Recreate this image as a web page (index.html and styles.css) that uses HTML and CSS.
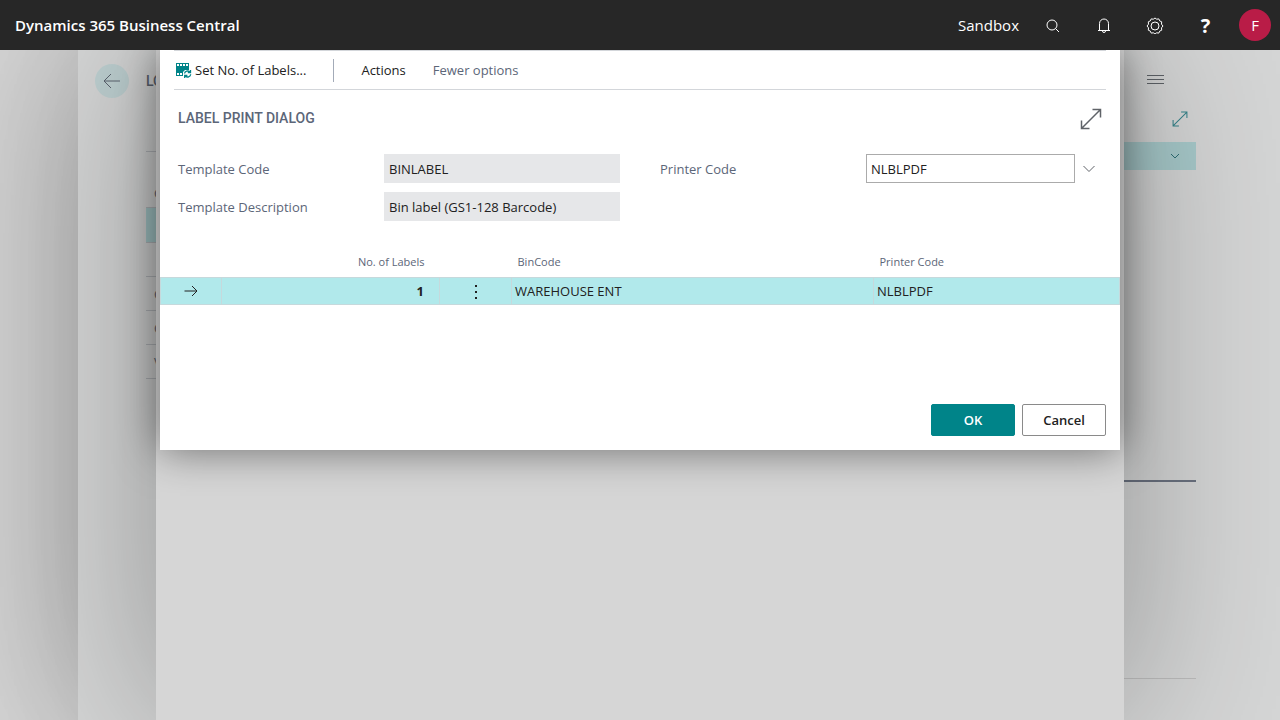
FILE: index.html
```html
<!DOCTYPE html>
<html lang="en">
<head>
  <meta charset="UTF-8">
  <meta name="viewport" content="width=device-width, initial-scale=1">
  <title>Label Print Dialog - Dynamics 365 Business Central</title>
  <link rel="stylesheet" href="styles.css">
</head>
<body>
  <header class="topbar">
    <a class="brand" href="#">Dynamics 365 Business Central</a>
    <span class="environment">Sandbox</span>
    <nav class="tools">
      <button type="button" aria-label="Search">
        <svg width="16" height="16" viewBox="0 0 16 16"><circle cx="7" cy="8" r="5"/><path d="M10.500 11.500L14 15"/></svg>
      </button>
      <button type="button" aria-label="Notifications">
        <svg width="16" height="16" viewBox="0 0 16 16"><path d="M2 13.500H14M3.500 13.500V6.500A4.500 4.500 0 0 1 12.500 6.500V13.500M6.500 14A1.500 1.500 0 0 0 9.500 14"/></svg>
      </button>
      <button type="button" aria-label="Settings">
        <svg width="18" height="18" viewBox="0 0 18 18"><circle cx="9" cy="10" r="4"/><path d="M7.300 3.200L9 2L10.700 3.200L12.800 2.900L13.700 4.900L15.700 5.800L15.500 8.200L17 10L15.500 11.800L15.700 14.200L13.700 15.100L12.800 17.100L10.700 16.800L9 18L7.300 16.800L5.200 17.100L4.300 15.100L2.300 14.200L2.500 11.800L1 10L2.500 8.200L2.300 5.800L4.300 4.900L5.200 2.900Z"/></svg>
      </button>
      <button type="button" class="help" aria-label="Help">?</button>
    </nav>
    <button type="button" class="avatar" aria-label="Account">F</button>
  </header>

  <main class="stage">
    <div class="page">
      <section class="list">
        <div class="list-head">
          <button type="button" class="back" aria-label="Back">
            <svg width="18" height="16" viewBox="0 0 18 16"><path d="M17 8H1.500M8 1L1 8L8 15"/></svg>
          </button>
          <span class="list-title">LO</span>
        </div>
        <ul class="list-rows">
          <li class="list-caption">C</li>
          <li class="selected"></li>
          <li></li>
          <li>C</li>
          <li>C</li>
          <li>V</li>
        </ul>
      </section>
      <aside class="factbox">
        <button type="button" class="icon-btn menu" aria-label="Menu">
          <svg width="17" height="11" viewBox="0 0 17 11"><path d="M0 1.500H17M0 5.500H17M0 9.500H17"/></svg>
        </button>
        <button type="button" class="icon-btn expand-small" aria-label="Expand">
          <svg width="16" height="16" viewBox="0 0 22 22"><path d="M1.500 20.500L20.500 1.500M12.500 1.500H20.500V9.500M1.500 12.500V20.500H9.500"/></svg>
        </button>
        <button type="button" class="factbox-bar" aria-label="Details">
          <svg width="10" height="6" viewBox="0 0 10 6"><path d="M1 1L5 5L9 1"/></svg>
        </button>
        <div class="factbox-body"></div>
        <div class="factbox-foot"></div>
      </aside>
    </div>

    <div class="sheet"></div>

    <form class="dialog" role="dialog" aria-labelledby="dialog-title">
      <div class="actions">
        <button type="button" class="action">
          <svg class="labels-icon" width="16" height="16" viewBox="0 0 16 16">
            <path fill="#008489" d="M0 1H13V8H9L7 10V14H0Z"/>
            <path fill="#fff" d="M1 2H3V4H1ZM4 2H6V4H4ZM7 2H9V4H7ZM10 2H12V4H10ZM1 11H3V13H1ZM4 11H6V13H4Z"/>
            <path fill="none" stroke="#008489" stroke-width="1.300" d="M8.500 11.500A3 3 0 0 1 13.700 10M14.500 8V10.700H11.800M14.700 12.300A3 3 0 0 1 9.500 14M8.700 16V13.300H11.400"/>
          </svg>
          Set No. of Labels...
        </button>
        <span class="divider"></span>
        <button type="button" class="action">Actions</button>
        <button type="button" class="action muted">Fewer options</button>
      </div>

      <div class="dialog-head">
        <h1 id="dialog-title">LABEL PRINT DIALOG</h1>
        <button type="button" class="icon-btn" aria-label="Expand dialog">
          <svg class="expand" width="22" height="22" viewBox="0 0 22 22"><path d="M1.500 20.500L20.500 1.500M12.500 1.500H20.500V9.500M1.500 12.500V20.500H9.500"/></svg>
        </button>
      </div>

      <div class="fields">
        <div class="field">
          <label for="template-code">Template Code</label>
          <input id="template-code" type="text" value="BINLABEL" readonly>
        </div>
        <div class="field">
          <label for="printer-code">Printer Code</label>
          <input id="printer-code" type="text" value="NLBLPDF">
          <button type="button" class="icon-btn lookup" aria-label="Choose printer">
            <svg width="12" height="8" viewBox="0 0 12 8"><path d="M0.500 1L6 6.500L11.500 1"/></svg>
          </button>
        </div>
        <div class="field">
          <label for="template-desc">Template Description</label>
          <input id="template-desc" type="text" value="Bin label (GS1-128 Barcode)" readonly>
        </div>
      </div>

      <table class="lines">
        <colgroup>
          <col class="col-mark"><col class="col-number"><col class="col-more"><col class="col-bin"><col>
        </colgroup>
        <thead>
          <tr>
            <th></th>
            <th class="number">No. of Labels</th>
            <th></th>
            <th>BinCode</th>
            <th>Printer Code</th>
          </tr>
        </thead>
        <tbody>
          <tr>
            <td class="center"><svg width="14" height="12" viewBox="0 0 14 12"><path d="M0.500 6H13M8 1L13 6L8 11"/></svg></td>
            <td class="number"><b>1</b></td>
            <td class="center">
              <button type="button" class="icon-btn more" aria-label="Show more options">
                <svg width="4" height="14" viewBox="0 0 4 14"><path d="M1 0H3V2H1ZM1 6H3V8H1ZM1 12H3V14H1Z"/></svg>
              </button>
            </td>
            <td>WAREHOUSE ENT</td>
            <td>NLBLPDF</td>
          </tr>
        </tbody>
      </table>

      <div class="buttons">
        <button type="submit" class="btn primary">OK</button>
        <button type="button" class="btn">Cancel</button>
      </div>
    </form>
  </main>
</body>
</html>
```
FILE: styles.css
```css
* {
  box-sizing: border-box;
}
body {
  margin: 0;
  height: 100vh;
  display: flex;
  flex-direction: column;
  overflow: hidden;
  font-family: "Segoe UI", "Open Sans", sans-serif;
  font-size: 13px;
  color: #212121;
}
button {
  padding: 0;
  border: none;
  background: none;
  font: inherit;
  color: inherit;
  cursor: pointer;
}
svg {
  display: block;
  fill: none;
  stroke: currentColor;
}

/* top bar */
.topbar {
  flex: none;
  height: 50px;
  display: flex;
  align-items: center;
  padding: 0 9px 0 15px;
  background: #272727;
  color: #fff;
  font-size: 15px;
}
.brand {
  margin-right: auto;
  color: inherit;
  font-weight: 600;
  text-decoration: none;
}
.tools {
  display: flex;
  margin: 0 8px;
}
.tools button {
  width: 51px;
  height: 50px;
  display: flex;
  align-items: center;
  justify-content: center;
}
.tools .help {
  font-size: 20px;
  font-weight: 700;
}
.avatar {
  width: 32px;
  height: 32px;
  border-radius: 50%;
  background: #b91c47;
}

/* stacked layers, each one over the one before */
.stage {
  flex: 1;
  min-height: 0;
  display: grid;
  grid-template-columns: 100%;
  grid-template-rows: 100%;
  overflow: hidden;
  background: #d6d6d6;
}
.page,
.sheet,
.dialog {
  grid-area: 1 / 1;
}
.page {
  display: flex;
  justify-content: space-between;
  margin-left: 78px;
  padding-right: 84px;
  background: #d5d6d6;
  box-shadow: 0 0 168px rgba(0, 0, 0, 0.27);
  color: #5d6470;
}
.sheet {
  margin: 0 156px;
  background: #d6d6d6;
  box-shadow: 0 0 168px rgba(0, 0, 0, 0.32);
}
.dialog {
  align-self: start;
  margin: 0 160px;
  padding-bottom: 14px;
  background: #fff;
  box-shadow: 0 0 40px rgba(0, 0, 0, 0.5);
}

/* page behind */
.list {
  width: 400px;
}
.list-head {
  display: flex;
  align-items: center;
  gap: 17px;
  padding: 14px 17px;
}
.back {
  width: 34px;
  height: 34px;
  display: flex;
  align-items: center;
  justify-content: center;
  border-radius: 50%;
  background: #bfd1d2;
}
.list-title {
  font: 500 14px Roboto, sans-serif;
}
.list-rows {
  list-style: none;
  margin: 39px 0 0 68px;
  padding: 0;
  border-top: 1px solid #b4b7bb;
}
.list-rows li {
  height: 34px;
  padding-left: 8px;
  border-bottom: 1px solid #b4b7bb;
  line-height: 34px;
}
.list-rows .list-caption {
  height: 56px;
  padding-top: 24px;
}
.list-rows .selected {
  height: 35px;
  background: #a8cacb;
}
.factbox {
  width: 200px;
  display: flex;
  flex-direction: column;
  align-items: flex-end;
}
.menu {
  margin: 24px 32px 0 0;
}
.icon-btn {
  color: #5f6368;
}
.expand-small {
  margin: 26px 8px 15px 0;
  color: #35838a;
}
.expand-small svg {
  stroke-width: 1.4;
}
.factbox-bar {
  width: 100%;
  height: 28px;
  display: flex;
  align-items: center;
  justify-content: flex-end;
  padding-right: 16px;
  background: #a8cacb;
  color: #2f6f75;
}
.factbox-body {
  width: 100%;
  height: 312px;
  border-bottom: 2px solid #6b7280;
}
.factbox-foot {
  width: 100%;
  height: 197px;
  border-bottom: 1px solid #bcbcbc;
}

/* dialog */
.actions {
  height: 40px;
  display: flex;
  align-items: center;
  gap: 27px;
  margin: 0 14px;
  padding-left: 2px;
  border-top: 1px solid #d3d6da;
  border-bottom: 1px solid #d3d6da;
}
.action {
  display: flex;
  align-items: center;
  gap: 3px;
}
.labels-icon {
  stroke: none;
}
.muted {
  color: #5c6678;
}
.divider {
  width: 1px;
  height: 23px;
  background: #a3abb8;
}
.dialog-head {
  display: flex;
  justify-content: space-between;
  padding: 18px 18px 0;
}
.dialog-head h1 {
  margin: 0;
  font: 500 14px/20px Roboto, sans-serif;
  color: #5c6678;
}
.expand {
  stroke-width: 1.5;
}
.fields {
  display: grid;
  grid-template-columns: 1fr 1fr;
  gap: 9px 40px;
  padding: 24px 18px 0;
}
.field {
  display: flex;
  align-items: center;
  height: 29px;
}
.field label {
  flex: none;
  width: 206px;
  color: #5c6678;
}
.field input {
  flex: 1;
  min-width: 0;
  height: 100%;
  padding: 0 4px;
  border: 1px solid #ababab;
  border-radius: 0;
  background: #fff;
  font: inherit;
  color: inherit;
}
.field input:read-only {
  border-color: #e6e7e9;
  background: #e6e7e9;
}
.lookup {
  width: 27px;
  height: 100%;
  display: flex;
  align-items: center;
  justify-content: center;
}
.lines {
  width: 100%;
  margin: 26px 0 99px;
  table-layout: fixed;
  border-collapse: collapse;
}
.col-mark {
  width: 61px;
}
.col-number {
  width: 218px;
}
.col-more {
  width: 72px;
}
.col-bin {
  width: 362px;
}
.lines th {
  height: 30px;
  padding: 0 6px;
  font-size: 11px;
  font-weight: 400;
  text-align: left;
  color: #5c6678;
}
.lines td {
  height: 27px;
  padding: 0 3px;
  border: 1px solid #c6d9dc;
  background: #b1e9eb;
}
.lines .number {
  padding-right: 15px;
  text-align: right;
}
.lines .center {
  text-align: center;
}
.lines .center svg {
  margin: 0 auto;
}
.lines .more {
  vertical-align: middle;
}
.lines .more svg {
  fill: #212121;
  stroke: none;
}
.buttons {
  display: flex;
  justify-content: flex-end;
  gap: 7px;
  padding: 0 14px;
}
.btn {
  width: 84px;
  height: 32px;
  border: 1px solid #8a8a8a;
  border-radius: 2px;
  font-weight: 600;
}
.primary {
  border-color: #008489;
  background: #008489;
  color: #fff;
}
```
